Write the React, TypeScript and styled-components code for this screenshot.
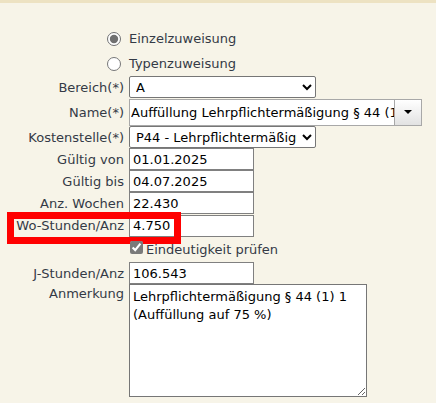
import React from 'react';
import styled, { createGlobalStyle } from 'styled-components';

const GlobalStyle = createGlobalStyle`
  body {
    margin: 0;
    background: #f7f4e8;
    font-family: "DejaVu Sans", Verdana, sans-serif;
    font-size: 13px;
    color: #343a46;
  }
`;

const TopBar = styled.div`
  height: 3px;
  background: #ede2c2;
`;

const Form = styled.div`
  display: flex;
  flex-direction: column;
  padding-top: 23px;
`;

const RadioRow = styled.label`
  display: flex;
  align-items: center;
  gap: 8px;
  height: 25px;
  padding-left: 107px;
`;

const Radio = styled.input`
  width: 14px;
  height: 14px;
  margin: 0;
  accent-color: #707070;
`;

const Row = styled.div<{ $top?: boolean; $h?: number }>`
  position: relative;
  display: flex;
  align-items: ${p => (p.$top ? 'flex-start' : 'center')};
  gap: 5px;
  height: ${p => (p.$h ? `${p.$h}px` : 'auto')};
`;

const Label = styled.div<{ $pad?: number }>`
  flex: none;
  width: 124px;
  text-align: right;
  white-space: nowrap;
  padding-top: ${p => p.$pad ?? 0}px;
`;

const TextInput = styled.input<{ $w?: number }>`
  box-sizing: border-box;
  width: ${p => p.$w ?? 125}px;
  height: 22px;
  margin: 0;
  padding: 0 3px;
  border: 1px solid #808080;
  background: #fff;
  font: inherit;
  color: #000;
  outline: none;
`;

const Select = styled.select`
  box-sizing: border-box;
  width: 187px;
  height: 22px;
  margin: 0;
  padding: 0 2px;
  border: 1px solid #767676;
  border-radius: 2px;
  background: #fff;
  font: inherit;
  color: #000;
`;

const Combo = styled.div`
  display: flex;
  height: 27px;
`;

const ComboInput = styled.input`
  box-sizing: border-box;
  width: 265px;
  height: 27px;
  margin: 0;
  padding: 0 0 0 1px;
  border: 1px solid #a8a8a8;
  border-right: none;
  background: #fff;
  font: inherit;
  color: #000;
  outline: none;
`;

const ComboButton = styled.button`
  box-sizing: border-box;
  width: 28px;
  height: 27px;
  margin: 0;
  padding: 0;
  border: 1px solid #a8a8a8;
  background: linear-gradient(#ffffff, #e2e2e2);
  display: flex;
  align-items: center;
  justify-content: center;
`;

const Check = styled.label`
  display: flex;
  align-items: center;
  gap: 3px;
  padding-left: 1px;
`;

const CheckBox = styled.input`
  width: 13px;
  height: 13px;
  margin: 0 0 4px 0;
  accent-color: #7a7a7a;
`;

const TextArea = styled.textarea`
  box-sizing: border-box;
  width: 238px;
  height: 113px;
  margin: 0;
  padding: 3px;
  border: 1px solid #767676;
  background: #fff;
  font: inherit;
  line-height: 18px;
  color: #000;
  outline: none;
`;

const Highlight = styled.div`
  position: absolute;
  left: 7px;
  top: -2px;
  width: 174px;
  height: 32px;
  box-sizing: border-box;
  border: 7px solid #ff0000;
  pointer-events: none;
`;

const fields = [
  { label: 'Gültig von', value: '01.01.2025' },
  { label: 'Gültig bis', value: '04.07.2025' },
  { label: 'Anz. Wochen', value: '22.430' },
];

export default function App() {
  return (
    <>
      <GlobalStyle />
      <TopBar />
      <Form>
        <RadioRow>
          <Radio type="radio" name="art" defaultChecked />
          Einzelzuweisung
        </RadioRow>
        <RadioRow>
          <Radio type="radio" name="art" />
          Typenzuweisung
        </RadioRow>

        <Row $h={22}>
          <Label>Bereich(*)</Label>
          <Select defaultValue="A">
            <option value="A">A</option>
          </Select>
        </Row>

        <Row $h={28}>
          <Label>Name(*)</Label>
          <Combo>
            <ComboInput readOnly value="Auffüllung Lehrpflichtermäßigung § 44 (1) 1 (Auffüllung auf 75 %)" />
            <ComboButton>
              <svg width="8" height="4" viewBox="0 0 8 4">
                <path d="M0 0h8L4 4z" fill="#000" />
              </svg>
            </ComboButton>
          </Combo>
        </Row>

        <Row $h={22}>
          <Label>Kostenstelle(*)</Label>
          <Select defaultValue="P44">
            <option value="P44">P44 - Lehrpflichtermäßigung</option>
          </Select>
        </Row>

        {fields.map(f => (
          <Row $h={22} key={f.label}>
            <Label>{f.label}</Label>
            <TextInput readOnly value={f.value} />
          </Row>
        ))}

        <Row $h={23}>
          <Label>Wo-Stunden/Anz</Label>
          <TextInput readOnly value="4.750" />
          <Highlight />
        </Row>

        <Row $h={25}>
          <Label />
          <Check>
            <CheckBox type="checkbox" defaultChecked />
            Eindeutigkeit prüfen
          </Check>
        </Row>

        <Row $h={22}>
          <Label>J-Stunden/Anz</Label>
          <TextInput readOnly value="106.543" />
        </Row>

        <Row $top>
          <Label $pad={2}>Anmerkung</Label>
          <TextArea readOnly value={'Lehrpflichtermäßigung § 44 (1) 1\n(Auffüllung auf 75 %)'} />
        </Row>
      </Form>
    </>
  );
}
